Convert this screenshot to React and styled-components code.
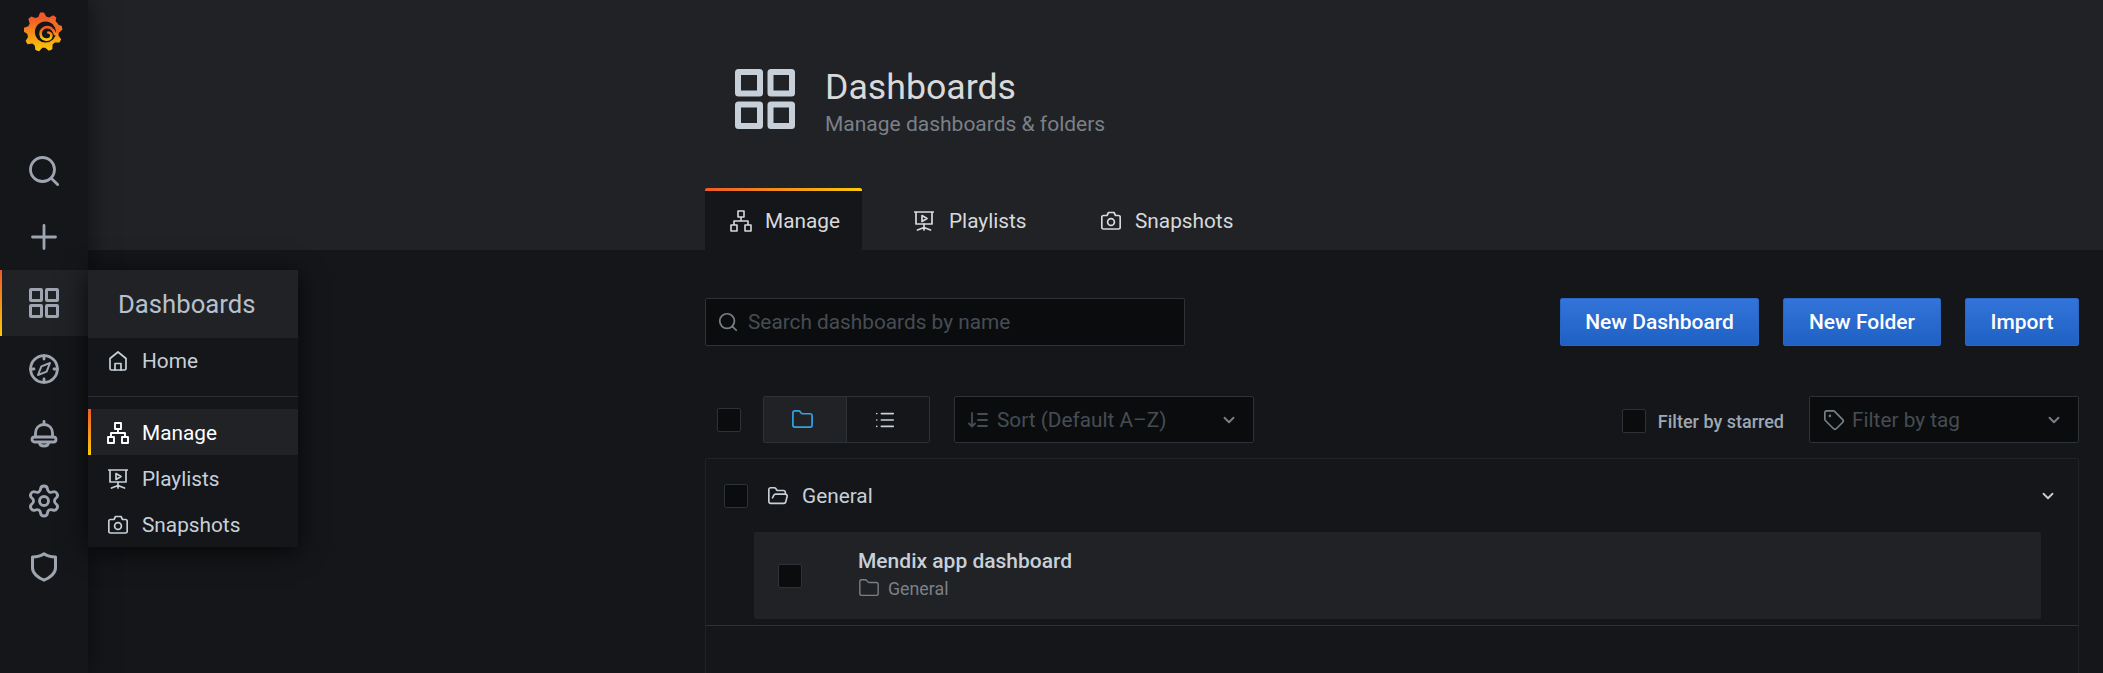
import React from "react"
import styled, { createGlobalStyle } from "styled-components"
import { Search, Settings, ChevronDown, Tag, FolderOpen, Folder as FolderIcon, List } from "lucide-react"

const GlobalStyle = createGlobalStyle`
  html, body {
    margin: 0;
    height: 100%;
    background: #141619;
    overflow: hidden;
  }
  * {
    box-sizing: border-box;
  }
  body {
    font-family: Roboto, "Liberation Sans", sans-serif;
    color: #d8d9da;
  }
`

const Shell = styled.div`
  display: flex;
  width: 2103px;
  height: 673px;
  overflow: hidden;
`

const SideMenu = styled.nav`
  position: relative;
  z-index: 3;
  flex: 0 0 88px;
  display: flex;
  flex-direction: column;
  background: #141619;
  box-shadow: 0 0 24px rgba(0, 0, 0, 0.55);
`

const LogoLink = styled.div`
  height: 138px;
  padding: 12px 0 0 24px;
`

const SideItem = styled.div`
  position: relative;
  height: 66px;
  display: flex;
  align-items: center;
  justify-content: center;
  color: #9ea5b0;
  background: ${(p) => (p.$active ? "#202226" : "transparent")};

  ${(p) =>
    p.$active &&
    `&::before {
      content: "";
      position: absolute;
      left: 0;
      top: 0;
      bottom: 0;
      width: 2px;
      background: linear-gradient(180deg, #f05a28, #fbca0a);
    }`}
`

const Dropdown = styled.div`
  position: absolute;
  left: 88px;
  top: 270px;
  width: 210px;
  height: 277px;
  background: #141619;
  box-shadow: 0 4px 24px rgba(0, 0, 0, 0.75);
`

const DropdownHeader = styled.div`
  height: 68px;
  display: flex;
  align-items: center;
  padding-left: 30px;
  background: #202226;
  color: #b7c0cc;
  font-size: 25.7px;
`

const DropdownItem = styled.div`
  position: relative;
  height: 46px;
  display: flex;
  align-items: center;
  gap: 14px;
  padding: ${(p) => (p.$nudge ? "1px" : "0")} 0 0 20px;
  font-size: 20.8px;
  color: ${(p) => (p.$active ? "#ffffff" : "#c7d0d9")};
  background: ${(p) => (p.$active ? "#202226" : "transparent")};

  ${(p) =>
    p.$active &&
    `&::before {
      content: "";
      position: absolute;
      left: 0;
      top: 0;
      bottom: 0;
      width: 3px;
      background: linear-gradient(180deg, #f05a28, #fbca0a);
    }`}
`

const DropdownDivider = styled.div`
  height: 1px;
  margin: 12px 0;
  background: #2c2e33;
`

const Main = styled.main`
  flex: 1;
  min-width: 0;
  display: flex;
  flex-direction: column;
`

const PageHeader = styled.header`
  height: 250px;
  flex: none;
  background: #202226;
  padding: 62px 24px 0 617px;
`

const HeaderTitleRow = styled.div`
  height: 76px;
  display: flex;
  gap: 30px;
  padding-left: 30px;
  padding-top: 7px;
  color: #c7d0d9;
`

const HeaderText = styled.div`
  display: flex;
  flex-direction: column;
  margin-top: -4px;
`

const PageTitle = styled.h1`
  margin: 0;
  font-size: 35.7px;
  line-height: 44px;
  font-weight: 400;
  color: #d8d9da;
`

const PageSub = styled.div`
  font-size: 21px;
  line-height: 26px;
  margin-top: 2px;
  color: #7b8087;
`

const Tabs = styled.div`
  display: flex;
  margin-top: 50px;
  height: 62px;
`

const Tab = styled.div`
  position: relative;
  display: flex;
  align-items: center;
  gap: ${(p) => p.$gap}px;
  height: 62px;
  width: ${(p) => p.$w}px;
  padding: 3px 0 0 ${(p) => p.$pad}px;
  font-size: 20.8px;
  color: #d8d9da;
  background: ${(p) => (p.$active ? "#141619" : "transparent")};
  border-radius: 2px 2px 0 0;

  ${(p) =>
    p.$active &&
    `&::before {
      content: "";
      position: absolute;
      left: 0;
      right: 0;
      top: 0;
      height: 3px;
      border-radius: 2px 2px 0 0;
      background: linear-gradient(90deg, #f05a28, #fbca0a);
    }`}
`

const Content = styled.section`
  flex: 1;
  padding: 48px 24px 0 617px;
  min-height: 0;
`

const ActionRow = styled.div`
  display: flex;
  align-items: center;
  height: 48px;
`

const Field = styled.div`
  display: flex;
  align-items: center;
  height: ${(p) => p.$h || 47}px;
  width: ${(p) => p.$w}px;
  padding: 0 15px 0 ${(p) => p.$pl || 13}px;
  background: #0b0c0e;
  border: 1px solid #2c3235;
  border-radius: 2px;
  font-size: 20.8px;
  color: #464c54;
`

const FieldText = styled.span`
  flex: 1;
  margin: ${(p) => (p.$low ? "1px" : "0")} 0 0 ${(p) => p.$gap || 8}px;
  white-space: nowrap;
`

const Button = styled.button`
  height: 48px;
  width: ${(p) => p.$w}px;
  margin-left: ${(p) => p.$ml || 0}px;
  padding: 0;
  border: 1px solid #2a66c4;
  border-radius: 2px;
  font-family: inherit;
  font-size: 21px;
  font-weight: 500;
  color: #fff;
  background: linear-gradient(180deg, #3274d9, #1f60c4);
`

const FilterRow = styled.div`
  display: flex;
  align-items: center;
  height: 47px;
  margin-top: 50px;
  padding-left: 12px;
`

const Checkbox = styled.span`
  flex: none;
  display: block;
  width: 24px;
  height: 24px;
  margin-top: ${(p) => p.$mt || 0}px;
  background: #0b0c0e;
  border: 1px solid #2c3235;
  border-radius: 2px;
`

const ToggleGroup = styled.div`
  display: flex;
  height: 47px;
  width: 167px;
  margin: 0 24px 0 22px;
  border: 1px solid #2c3235;
  border-radius: 2px;
  overflow: hidden;
`

const ToggleItem = styled.div`
  flex: 1;
  display: flex;
  align-items: center;
  justify-content: center;
  padding-right: 6px;
  color: ${(p) => (p.$active ? "#33a2e5" : "#c7d0d9")};
  background: ${(p) => (p.$active ? "#202226" : "transparent")};
  & + & {
    border-left: 1px solid #2c3235;
  }
`

const Spacer = styled.div`
  flex: 1;
`

const StarLabel = styled.label`
  font-size: 18px;
  font-weight: 500;
  color: #9fa7b3;
  margin: 4px 25px 0 12px;
  white-space: nowrap;
`

const ListPanel = styled.div`
  margin-top: 15px;
  height: 300px;
  border: 1px solid #202226;
  border-radius: 2px;
`

const SectionHead = styled.div`
  display: flex;
  align-items: center;
  height: 73px;
  padding: 1px 21px 0 18px;
  font-size: 20.8px;
  color: #c7d0d9;
`

const SectionName = styled.span`
  flex: 1;
  margin-left: 13px;
`

const DashRow = styled.div`
  display: flex;
  align-items: center;
  height: 87px;
  margin: 0 37px 0 48px;
  padding-left: 24px;
  background: #202226;
  border-radius: 2px;
`

const DashInfo = styled.div`
  margin: -3px 0 0 56px;
  display: flex;
  flex-direction: column;
`

const DashTitle = styled.div`
  font-size: 21px;
  line-height: 28px;
  font-weight: 500;
  color: #c7d0d9;
`

const DashFolder = styled.div`
  display: flex;
  align-items: center;
  gap: 8px;
  font-size: 17.8px;
  line-height: 27px;
  color: #7b8087;
`

const SectionLine = styled.div`
  height: 1px;
  margin-top: 6px;
  background: #2c3235;
`

const Svg = ({ size = 24, w, h, children, sw = 2, vb = "0 0 24 24", style }) => (
  <svg
    width={w || size}
    height={h || size}
    viewBox={vb}
    fill="none"
    stroke="currentColor"
    strokeWidth={sw}
    strokeLinecap="round"
    strokeLinejoin="round"
    style={{ flex: "none", display: "block", ...style }}
  >
    {children}
  </svg>
)

const Logo = () => {
  // gear outline, built once from polar points
  const pts = []
  const teeth = 9
  const cx = 19
  const cy = 20
  for (let i = 0; i < teeth; i++) {
    const step = (Math.PI * 2) / teeth
    const a = i * step - Math.PI / 2 - 0.05
    pts.push([a - step * 0.14, 19.6], [a + step * 0.14, 19.6], [a + step * 0.36, 15.8], [a + step * 0.64, 15.8])
  }
  const d =
    pts
      .map(([a, r], i) => `${i ? "L" : "M"}${(cx + r * Math.cos(a)).toFixed(2)} ${(cy + r * Math.sin(a)).toFixed(2)}`)
      .join(" ") + " Z"
  return (
    <svg width="40" height="40" viewBox="0 0 40 40" style={{ display: "block" }}>
      <defs>
        <linearGradient id="gf" x1="0" y1="0" x2="0" y2="1">
          <stop offset="0.15" stopColor="#f05a28" />
          <stop offset="1" stopColor="#fbca0a" />
        </linearGradient>
      </defs>
      <path d={d} fill="url(#gf)" />
      <circle cx="21.5" cy="20" r="10.6" fill="#141619" />
      <path d="M26 6 C32 8 36 13 37 19 L32.5 22 C32 15 30 11 25 9.5 Z" fill="#f26a25" />
      <path
        d="M31 22 C29.5 16.5 25 14 20.8 15.5 C16.8 17 15.5 21.5 17.4 25 C19.5 28.3 24.5 28.5 26.7 25.8 C28.4 23.5 27 20.5 24.4 20.5"
        fill="none"
        stroke="url(#gf)"
        strokeWidth="2.7"
        strokeLinecap="round"
      />
    </svg>
  )
}

const AppsIcon = () => (
  <Svg size={30} vb="0 0 30 30" sw={3}>
    <rect x="1.5" y="1.5" width="11" height="11" rx="0.6" />
    <rect x="17.5" y="1.5" width="11" height="11" rx="0.6" />
    <rect x="1.5" y="17.5" width="11" height="11" rx="0.6" />
    <rect x="17.5" y="17.5" width="11" height="11" rx="0.6" />
  </Svg>
)

const BigAppsIcon = () => (
  <Svg size={60} vb="0 0 60 60" sw={6}>
    <rect x="3" y="3" width="22" height="21.5" rx="0.5" />
    <rect x="35.5" y="3" width="21.5" height="21.5" rx="0.5" />
    <rect x="3" y="35.5" width="22" height="21.5" rx="0.5" />
    <rect x="35.5" y="35.5" width="21.5" height="21.5" rx="0.5" />
  </Svg>
)

const BigSearchIcon = () => (
  <Svg size={30} vb="0 0 30 30" sw={2.8}>
    <circle cx="13.5" cy="13.5" r="12" />
    <path d="M22.5 22.5 L28.6 28.6" />
  </Svg>
)

const PlusIcon = () => (
  <Svg size={26} vb="0 0 26 26" sw={2.8}>
    <path d="M13 1.5 V24.5 M1.5 13 H24.5" />
  </Svg>
)

const CompassIcon = () => (
  <Svg size={30} vb="0 0 30 30" sw={2.8}>
    <circle cx="15" cy="15" r="13.4" />
    <path d="M15 1.6 V5 M15 25 V28.4 M1.6 15 H5 M25 15 H28.4" />
    <path d="M21 9 L17.6 17.6 L9 21 L12.4 12.4 Z" strokeWidth="2" />
  </Svg>
)

const BellIcon = () => (
  <Svg size={30} vb="0 0 30 30" sw={2.8}>
    <path d="M15 1.5 V4" />
    <path d="M6.5 17 V13 C6.5 8 10 4.5 15 4.5 C20 4.5 23.5 8 23.5 13 V17" />
    <rect x="3" y="17" width="24" height="5" rx="2.5" />
    <path d="M10.5 23 C11 27 19 27 19.5 23" />
  </Svg>
)

const ShieldIcon = () => (
  <Svg size={30} vb="0 0 30 30" sw={3}>
    <path d="M15 1.8 C18 4 21 5 26.5 5 C26.5 5 26.5 12 26.5 16 C26.5 21 21 26 15 28.2 C9 26 3.5 21 3.5 16 C3.5 12 3.5 5 3.5 5 C9 5 12 4 15 1.8 Z" />
  </Svg>
)

const HomeIcon = () => (
  <Svg size={20} sw={1.7} vb="0 0 20 20">
    <path d="M10 1 L2 7.5 V17.5 C2 18.5 2.5 19 3.5 19 H16.5 C17.5 19 18 18.5 18 17.5 V7.5 Z" />
    <path d="M7 19 V12.5 H13 V19" />
  </Svg>
)

const SitemapIcon = ({ size = 22, sw = 1.9, style }) => (
  <Svg size={size} sw={sw} vb="0 0 22 22" style={style}>
    <rect x="8" y="1" width="6" height="6" />
    <rect x="1" y="15" width="6" height="6" />
    <rect x="15" y="15" width="6" height="6" />
    <path d="M11 7 V11 M4 15 V11 H18 V15" strokeLinecap="butt" />
  </Svg>
)

const PresentIcon = ({ size = 20 }) => (
  <Svg size={size} sw={1.7} vb="0 0 20 20">
    <path d="M0.5 1 H19.5 M2 1 V13 H18 V1" />
    <path d="M8 4.5 L13 7.5 L8 10.5 Z" />
    <path d="M10 13 V16.5 M3.5 19 L10 16.5 L16.5 19 M10 16.5 V19" />
  </Svg>
)

const CameraIcon = ({ size = 20 }) => (
  <Svg size={size} sw={1.7} vb="0 0 20 20">
    <path d="M2.5 4.5 H6 L7.5 1.5 H13 L14.5 4.5 H17.5 C18.5 4.5 19.2 5.2 19.2 6 V16.5 C19.2 17.4 18.5 18 17.5 18 H2.5 C1.5 18 0.8 17.4 0.8 16.5 V6 C0.8 5.2 1.5 4.5 2.5 4.5 Z" />
    <circle cx="10" cy="11" r="3.4" />
  </Svg>
)

const SortIcon = () => (
  <Svg size={20} sw={1.8} vb="0 0 20 20">
    <path d="M4 3 V16 M1 13.5 L4 16.5 L7 13.5" />
    <path d="M10 4 H19 M10 10 H19 M10 16 H19" />
  </Svg>
)

const App = () => (
  <Shell>
    <GlobalStyle />
    <SideMenu>
      <LogoLink>
        <Logo />
      </LogoLink>
      <SideItem>
        <BigSearchIcon />
      </SideItem>
      <SideItem>
        <PlusIcon />
      </SideItem>
      <SideItem $active>
        <AppsIcon />
      </SideItem>
      <SideItem>
        <CompassIcon />
      </SideItem>
      <SideItem>
        <BellIcon />
      </SideItem>
      <SideItem>
        <Settings size={36} strokeWidth={1.9} />
      </SideItem>
      <SideItem>
        <ShieldIcon />
      </SideItem>
      <Dropdown>
        <DropdownHeader>Dashboards</DropdownHeader>
        <DropdownItem>
          <HomeIcon />
          Home
        </DropdownItem>
        <DropdownDivider />
        <DropdownItem $active $nudge>
          <SitemapIcon style={{ margin: "0 -1px" }} />
          Manage
        </DropdownItem>
        <DropdownItem $nudge>
          <PresentIcon />
          Playlists
        </DropdownItem>
        <DropdownItem $nudge>
          <CameraIcon />
          Snapshots
        </DropdownItem>
      </Dropdown>
    </SideMenu>
    <Main>
      <PageHeader>
        <HeaderTitleRow>
          <BigAppsIcon />
          <HeaderText>
            <PageTitle>Dashboards</PageTitle>
            <PageSub>Manage dashboards &amp; folders</PageSub>
          </HeaderText>
        </HeaderTitleRow>
        <Tabs>
          <Tab $active $w={157} $pad={25} $gap={13}>
            <SitemapIcon sw={1.6} />
            Manage
          </Tab>
          <Tab $w={190} $pad={52} $gap={15}>
            <PresentIcon />
            Playlists
          </Tab>
          <Tab $w={200} $pad={49} $gap={14}>
            <CameraIcon />
            Snapshots
          </Tab>
        </Tabs>
      </PageHeader>
      <Content>
        <ActionRow>
          <Field $w={480} $h={48} $pl={11}>
            <Search size={22} color="#7b8087" strokeWidth={1.9} />
            <FieldText $gap={9}>Search dashboards by name</FieldText>
          </Field>
          <Spacer />
          <Button $w={199}>New Dashboard</Button>
          <Button $w={158} $ml={24}>
            New Folder
          </Button>
          <Button $w={114} $ml={24}>
            Import
          </Button>
        </ActionRow>
        <FilterRow>
          <Checkbox />
          <ToggleGroup>
            <ToggleItem $active>
              <FolderIcon size={23} strokeWidth={1.8} />
            </ToggleItem>
            <ToggleItem>
              <List size={22} strokeWidth={1.8} />
            </ToggleItem>
          </ToggleGroup>
          <Field $w={300}>
            <SortIcon />
            <FieldText $gap={9} $low>
              Sort (Default A–Z)
            </FieldText>
            <ChevronDown size={18} color="#7b8087" strokeWidth={2.4} />
          </Field>
          <Spacer />
          <Checkbox $mt={2} />
          <StarLabel>Filter by starred</StarLabel>
          <Field $w={270} $pl={13}>
            <Tag size={22} strokeWidth={1.8} color="#7b8087" />
            <FieldText $gap={7} $low>
              Filter by tag
            </FieldText>
            <ChevronDown size={18} color="#7b8087" strokeWidth={2.4} />
          </Field>
        </FilterRow>
        <ListPanel>
          <SectionHead>
            <Checkbox />
            <FolderOpen size={22} strokeWidth={1.8} style={{ marginLeft: 19 }} />
            <SectionName>General</SectionName>
            <ChevronDown size={18} strokeWidth={2.4} />
          </SectionHead>
          <DashRow>
            <Checkbox />
            <DashInfo>
              <DashTitle>Mendix app dashboard</DashTitle>
              <DashFolder>
                <FolderIcon size={22} strokeWidth={1.5} />
                General
              </DashFolder>
            </DashInfo>
          </DashRow>
          <SectionLine />
        </ListPanel>
      </Content>
    </Main>
  </Shell>
)

export default App
